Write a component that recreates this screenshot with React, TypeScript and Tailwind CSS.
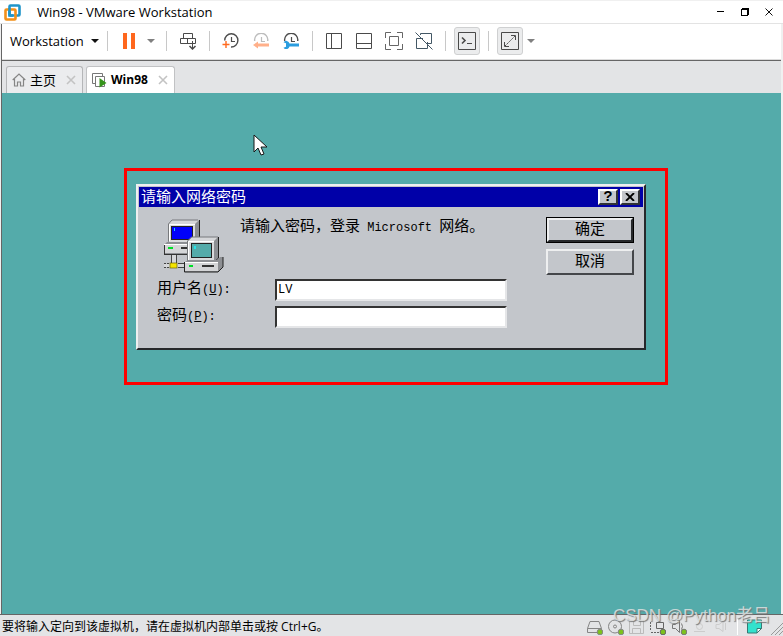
import React, { useState } from 'react';

const uiFont = "font-['Open_Sans','Noto_Sans_CJK_SC',sans-serif]";
const guestFont = "font-['Liberation_Mono','Noto_Sans_CJK_SC',monospace]";

function Separator() {
  return <span className="h-5 w-px shrink-0 bg-[#c8c8c8]" />;
}

function ToolButton({ label, active, children }: { label: string; active?: boolean; children: React.ReactNode }) {
  return (
    <button
      aria-label={label}
      className={
        active
          ? 'flex h-7 w-[26px] items-center justify-center rounded-[3px] border border-[#cfd0d1] bg-[#ebeced]'
          : 'flex h-7 w-[30px] items-center justify-center'
      }
    >
      {children}
    </button>
  );
}

function Caret({ color }: { color: string }) {
  return (
    <svg width="8" height="4" viewBox="0 0 8 4">
      <path d="M0 0h8L4 4z" fill={color} />
    </svg>
  );
}

function ClockIcon({ kind }: { kind: 'take' | 'revert' | 'manage' }) {
  const faded = kind === 'revert';
  return (
    <svg width="18" height="16" viewBox="0 0 18 16" fill="none">
      <path
        d={kind === 'take' ? 'M2.7 7.500A6.600 6.600 0 1 1 9 14' : 'M2.7 8A6.600 6.600 0 1 1 15.7 8'}
        stroke={faded ? '#bdbdbd' : '#4d4d4d'}
        strokeWidth="1.4"
      />
      <path d="M9.5 4v4.5H13" stroke={faded ? '#bdbdbd' : '#4d4d4d'} strokeWidth="1.2" />
      {kind === 'take' && <path d="M.5 11.500h7M4 8v7" stroke="#ff6a1f" strokeWidth="1.4" />}
      {kind === 'revert' && <path d="M1 12l5-3.500V10.500h11v3H6v2z" fill="#ffb08a" />}
      {kind === 'manage' && (
        <path d="M1.500 9.300A3.300 3.300 0 0 1 7.500 10.500H17v3H7.500A3.300 3.300 0 0 1 1.500 14.700L4 13.700V10.300z" fill="#2b9ddf" />
      )}
    </svg>
  );
}

function TabClose() {
  return (
    <svg width="10" height="10" viewBox="0 0 10 10">
      <path d="M1 1l8 8M9 1L1 9" stroke="#c3c3c3" strokeWidth="1.6" />
    </svg>
  );
}

function NetworkIcon() {
  return (
    <svg width="60" height="54" viewBox="0 0 60 54" aria-hidden="true">
      <path d="M4 5l4-4h27v18l-4 4H4z" fill="#8d8f93" />
      <path d="M4 5l4-4h27l-4 4z" fill="#d5d6d9" />
      <path d="M4.500 22V5L8 1h26" fill="none" stroke="#77797c" />
      <path d="M35.500 1v18l-4 4" fill="none" stroke="#222" />
      <rect x="5" y="5" width="26" height="18" fill="#d9dadc" />
      <path d="M5.500 22V5.500H31" fill="none" stroke="#fff" />
      <rect x="7" y="7" width="22" height="14" fill="#222" />
      <rect x="8" y="8" width="20" height="12" fill="#0000fa" />
      <rect x="10" y="9" width="1" height="3" fill="#19d5f0" />
      <path d="M0 26l3-3h29v12H0z" fill="#8d8f93" />
      <rect x="1" y="25" width="31" height="9" fill="#d4d5d7" />
      <path d="M0 25.500h32" stroke="#fff" />
      <path d="M0 35.500h24M.5 26v9" stroke="#333" fill="none" />
      <rect x="4" y="28" width="5" height="2" fill="#00df28" />
      <rect x="17" y="28" width="8" height="2" fill="#333" />
      <rect x="7" y="36" width="6" height="9" fill="#d5d6d8" />
      <path d="M7.500 36v8M12.500 36v8" stroke="#444" />
      <rect x="0" y="45" width="22" height="3" fill="#d5d6d8" />
      <path d="M0 44.500h7M0 48.500h7" stroke="#444" strokeDasharray="2 1" />
      <path d="M14 44.500h8M14 48.500h8" stroke="#444" />
      <rect x="6" y="44" width="7" height="5" fill="#f4e400" stroke="#6d6600" strokeWidth=".7" />
      <path d="M24 22l4-4h26v22l-4 4H24z" fill="#8d8f93" />
      <path d="M24 22l4-4h26l-4 4z" fill="#d5d6d9" />
      <path d="M23.500 43V22l4-4H54" fill="none" stroke="#77797c" />
      <path d="M54.500 18v21l-4 4" fill="none" stroke="#222" />
      <rect x="24" y="22" width="26" height="20" fill="#d9dadc" />
      <path d="M24.500 42V22.500H50" fill="none" stroke="#fff" />
      <rect x="27" y="24" width="21" height="15" fill="#222" />
      <rect x="28" y="25" width="19" height="13" fill="#54abaa" />
      <rect x="30" y="27" width="2" height="3" fill="#25e5e9" />
      <path d="M21 43l3-2h29l3-3h3v10l-5 5H21z" fill="#8d8f93" />
      <rect x="21" y="43" width="33" height="9" fill="#d4d5d7" />
      <path d="M21 43.500h33" stroke="#fff" />
      <path d="M20.500 43v10H54l5-5V38" stroke="#222" fill="none" />
      <rect x="25" y="46" width="4" height="2" fill="#00df28" />
      <rect x="38" y="46" width="12" height="2" fill="#333" />
    </svg>
  );
}

function TitleBar() {
  return (
    <header className="flex h-6 items-center border-t border-b border-t-[#f0f0f0] border-b-[#e3e3e3] bg-white pr-0.5 pl-1">
      <svg width="17" height="17" viewBox="0 0 17 17" fill="none" className="mr-4">
        <rect x="5.500" y="1.500" width="10" height="10" rx="1" stroke="#1f94c9" strokeWidth="2.600" />
        <rect x="1.500" y="5.500" width="10" height="10" rx="1" stroke="#f39019" strokeWidth="2.600" />
        <path d="M5.500 4v7.500H9" stroke="#1f94c9" strokeWidth="2.600" />
      </svg>
      <h1 className="grow text-[13px] leading-5 text-black">Win98 - VMware Workstation</h1>
      <div className="flex items-center">
        <button aria-label="Minimize" className="flex h-5 w-6 items-center justify-center">
          <svg width="8" height="8" viewBox="0 0 8 8" shapeRendering="crispEdges"><path d="M0 3h7v1H0z" /></svg>
        </button>
        <button aria-label="Restore" className="flex h-5 w-6 items-center justify-center">
          <svg width="8" height="8" viewBox="0 0 8 8" shapeRendering="crispEdges">
            <path d="M1 0h7v7H7V8H0V1h1zM1 2v5h5V2z" fillRule="evenodd" />
          </svg>
        </button>
        <button aria-label="Close" className="flex h-5 w-6 items-center justify-center">
          <svg width="8" height="8" viewBox="0 0 8 8"><path d="M.5.5l7 7M7.500.5l-7 7" stroke="#111" /></svg>
        </button>
      </div>
    </header>
  );
}

function Toolbar() {
  const line = '#4a4a4a';
  return (
    <div role="toolbar" className="flex h-[37px] items-center border-b border-b-[#666] bg-white pb-0.5 shadow-[inset_0_-1px_0_#dcdcdc]">
      <button className="flex w-[105px] items-center justify-between pr-2 pl-2 text-[13px] leading-5 text-black">
        Workstation <Caret color="#111" />
      </button>
      <Separator />
      <div className="flex items-center pr-2 pl-1.5">
        <ToolButton label="Suspend">
          <svg width="12" height="16" viewBox="0 0 12 16"><path d="M0 0h4v16H0zM8 0h4v16H8z" fill="#ff671d" /></svg>
        </ToolButton>
        <button aria-label="Power options" className="flex h-7 w-[14px] items-center justify-center"><Caret color="#808080" /></button>
      </div>
      <Separator />
      <div className="flex items-center px-1.5">
        <ToolButton label="Send Ctrl+Alt+Del">
          <svg width="17" height="17" viewBox="0 0 17 17" fill="none" stroke={line}>
            <path d="M3.500 5.500v-5h9v5M.5 5.500h15v5H.5zM7.500 5.500v5M12.500 8v8" />
            <path d="M9.500 13l3 3 3-3" strokeWidth="1.500" />
          </svg>
        </ToolButton>
      </div>
      <Separator />
      <div className="flex items-center px-1.5">
        <ToolButton label="Take snapshot"><ClockIcon kind="take" /></ToolButton>
        <ToolButton label="Revert snapshot"><ClockIcon kind="revert" /></ToolButton>
        <ToolButton label="Manage snapshots"><ClockIcon kind="manage" /></ToolButton>
      </div>
      <Separator />
      <div className="flex items-center px-1.5">
        <ToolButton label="Show library">
          <svg width="16" height="16" viewBox="0 0 16 16" fill="none" stroke={line}><path d="M.5.5h15v15H.5zM5.500.5v15" /></svg>
        </ToolButton>
        <ToolButton label="Show thumbnails">
          <svg width="16" height="16" viewBox="0 0 16 16" fill="none" stroke={line}><path d="M.5.5h15v15H.5zM.5 10.500h15" /></svg>
        </ToolButton>
        <ToolButton label="Full screen">
          <svg width="18" height="18" viewBox="0 0 18 18" fill="none" stroke="#666">
            <path d="M.5 6V.5H6M12 .5h5.500V6M17.500 12v5.500H12M6 17.500H.5V12M4.500 4.500h9v9h-9z" />
          </svg>
        </ToolButton>
        <ToolButton label="Unity">
          <svg width="18" height="18" viewBox="0 0 18 18" fill="none" stroke="#435765">
            <path d="M5.500 3V1.500h11v10H13M8 6.500H1.500v10h11V10M.5.5l17 17" />
          </svg>
        </ToolButton>
      </div>
      <Separator />
      <div className="flex items-center px-2">
        <ToolButton label="Console view" active>
          <svg width="18" height="18" viewBox="0 0 18 18" fill="none" stroke={line} className="shrink-0">
            <path d="M.5.5h17v17H.5zM9 11.500h5" /><path d="M4 5.500l3 3-3 3" strokeWidth="1.600" />
          </svg>
        </ToolButton>
      </div>
      <Separator />
      <div className="flex items-center pl-2">
        <ToolButton label="Stretch guest" active>
          <svg width="18" height="18" viewBox="0 0 18 18" fill="none" stroke={line} className="shrink-0">
            <path d="M.5.5h17v17H.5zM10 3.500h4.500V8M3.500 10v4.500H8" /><path d="M4 14L14 4" strokeDasharray="2 1" />
          </svg>
        </ToolButton>
        <button aria-label="Stretch options" className="flex h-7 w-4 items-center justify-center"><Caret color="#808080" /></button>
      </div>
    </div>
  );
}

function Tabs() {
  return (
    <nav className="flex h-8 items-end gap-[3px] bg-[#e3e4e6] pl-1">
      <div className="flex h-[27px] items-center rounded-t-[3px] border border-b-0 border-[#b5b6b8] bg-[#ebecee] pr-1.5 pl-[5px]">
        <svg width="14" height="14" viewBox="0 0 14 14" fill="none" stroke="#858585" strokeWidth="1.200" className="mr-1">
          <path d="M.7 7L7 1l6.300 6M2.500 6v7h3V9h3v4h3V6" />
        </svg>
        <button className="mr-2.5 text-[13px] leading-5 text-black">主页</button>
        <button aria-label="关闭 主页"><TabClose /></button>
      </div>
      <div className="flex h-[27px] items-center rounded-t-[3px] border border-b-0 border-[#c1c2c4] bg-white pr-1.5 pl-[5px]">
        <svg width="15" height="15" viewBox="0 0 15 15" fill="none" stroke="#777" className="mr-1">
          <path d="M3 10.500H.5V.5h10V3M3.500 3.500h9v10h-9z" fill="none" /><path d="M7.500 5v9.500L14.500 10z" fill="#36941b" stroke="none" />
        </svg>
        <button className="mr-2.5 text-[12px] leading-5 font-bold text-black">Win98</button>
        <button aria-label="关闭 Win98"><TabClose /></button>
      </div>
    </nav>
  );
}

const sunken =
  'border-2 border-t-[#333] border-l-[#333] border-r-[#e5e6e8] border-b-[#e5e6e8] bg-white';

function LoginDialog() {
  const [user, setUser] = useState('LV');
  const [password, setPassword] = useState('');
  return (
    <section
      role="dialog"
      aria-labelledby="dialog-title"
      className={`${guestFont} border-2 border-t-[#eeeff0] border-r-[#26282b] border-b-[#26282b] border-l-[#eeeff0] bg-[#c3c6cb] p-px text-[12px] text-black`}
    >
      <header className="flex h-5 items-center bg-[#0000a8] pr-[3px] pl-0.5">
        <h2 id="dialog-title" className="grow pt-[3px] text-[15px] leading-5 text-white">请输入网络密码</h2>
        <div className="flex gap-0.5">
          <button aria-label="帮助" className="flex h-4 w-5 items-center justify-center border-2 border-t-white border-r-[#303235] border-b-[#303235] border-l-white bg-[#c3c6cb] pt-0.5 text-[15px] leading-3 font-bold">?</button>
          <button aria-label="关闭" className="flex h-4 w-5 items-center justify-center border-2 border-t-white border-r-[#303235] border-b-[#303235] border-l-white bg-[#c3c6cb]">
            <svg width="10" height="8" viewBox="0 0 10 8"><path d="M1 0l8 8M9 0L1 8" stroke="#000" strokeWidth="1.800" /></svg>
          </button>
        </div>
      </header>
      <div className="flex justify-between pt-2.5 pr-[9px] pb-[19px] pl-[18px]">
        <form onSubmit={(e) => e.preventDefault()}>
          <div className="flex gap-4 pt-0.5 pl-[7px]">
            <NetworkIcon />
            <p className="pt-px leading-4 whitespace-nowrap">
              <span className="text-[15px]">请输入密码，登录</span> Microsoft <span className="text-[15px]">网络。</span>
            </p>
          </div>
          <div className="mt-1.5 grid grid-cols-[118px_232px] items-center gap-y-[5px]">
            <label htmlFor="user" className="leading-5"><span className="text-[15px]">用户名</span>(<u>U</u>):</label>
            <input id="user" value={user} onChange={(e) => setUser(e.target.value)} className={`${sunken} h-[22px] px-px font-['Liberation_Mono',monospace] text-[12px] outline-none`} />
            <label htmlFor="password" className="leading-5"><span className="text-[15px]">密码</span>(<u>P</u>):</label>
            <input id="password" type="password" value={password} onChange={(e) => setPassword(e.target.value)} className={`${sunken} h-[22px] px-px outline-none`} />
          </div>
        </form>
        <div className="flex w-[88px] flex-col gap-1.5">
          <button className="h-[26px] border border-black bg-[#c3c6cb] text-[15px]">
            <span className="flex h-full items-center justify-center border-2 border-t-[#eeeff0] border-r-[#26282b] border-b-[#26282b] border-l-[#eeeff0] pt-0.5 leading-5">确定</span>
          </button>
          <button className="flex h-[26px] items-center justify-center border-2 border-t-[#eeeff0] border-r-[#44464a] border-b-[#44464a] border-l-[#eeeff0] bg-[#c3c6cb] pt-0.5 text-[15px] leading-5">取消</button>
        </div>
      </div>
    </section>
  );
}

function StatusBar() {
  const dot = <circle cx="14" cy="14" r="2.800" fill="#7cc21c" />;
  return (
    <footer className="relative flex h-[22px] items-center justify-between border-t border-[#666] bg-[#e3e4e6] pl-0.5">
      <p className="pt-0.5 text-[12px] leading-5 text-black">要将输入定向到该虚拟机，请在虚拟机内部单击或按 Ctrl+G。</p>
      <div className="flex items-center pt-0.5">
        <div className="mr-1 flex items-center gap-1">
          <svg width="17" height="17" viewBox="0 0 17 17" fill="none" stroke="#858585"><path d="M4 3.500h9l2.500 7v4h-14v-4zM1.500 10.500h14" />{dot}</svg>
          <svg width="17" height="17" viewBox="0 0 17 17" fill="none" stroke="#858585"><circle cx="8" cy="8.500" r="6.500" /><circle cx="8" cy="8.500" r="1.500" />{dot}</svg>
          <svg width="17" height="17" viewBox="0 0 17 17" fill="none" stroke="#bbb"><path d="M1.500 2.500h14v13h-14zM5.500 2.500v5h7v-5M4.500 15.500v-5h8v5" /></svg>
          <svg width="17" height="17" viewBox="0 0 17 17" fill="none" stroke="#666"><path d="M2 14.500h8M1.500 4v9" strokeDasharray="2 1" /><path d="M7.500 4.500h7v6h-7z" />{dot}</svg>
          <svg width="17" height="17" viewBox="0 0 17 17" fill="none" stroke="#777"><path d="M2.500 6.500h3l4-4v12l-4-4h-3zM11.500 5.500q2 3 0 6" />{dot}</svg>
          <svg width="17" height="17" viewBox="0 0 17 17" fill="none" stroke="#ccc"><circle cx="8.500" cy="8.500" r="3" /><path d="M3 13.500h11" /></svg>
          <svg width="17" height="17" viewBox="0 0 17 17" fill="none" stroke="#ccc"><path d="M4 6.500h3l4-3v10l-4-3H4zM13.500 5v7" /></svg>
        </div>
        <span className="mr-2 ml-1 h-4 w-px bg-white" />
        <svg width="17" height="17" viewBox="0 0 17 17" className="mr-2"><path d="M1.500 2h14v8.500L11 15H1.500z" fill="#32e2cd" stroke="#367a74" /><path d="M11 15v-4.500h4.500z" fill="#fff" stroke="#367a74" /></svg>
        <svg width="12" height="12" viewBox="0 0 12 12" stroke="#999" className="self-end"><path d="M0 12L12 0M4 12l8-8M8 12l4-4" /></svg>
      </div>
      <span className="absolute right-[13px] bottom-2 font-['Liberation_Sans','Noto_Sans_CJK_SC',sans-serif] text-[17px] leading-6 whitespace-nowrap text-[#e5e7e7]/80 [text-shadow:1px_1px_1px_#777]">
        CSDN @Python老吕
      </span>
    </footer>
  );
}

export default function App() {
  return (
    <div className={`${uiFont} flex min-h-screen flex-col bg-[#f0f0f0]`}>
      <TitleBar />
      <div className="mr-0.5 ml-px flex grow flex-col border-l border-[#666]">
        <Toolbar />
        <Tabs />
        <main className="relative grow bg-[#54abaa]">
          <svg width="15" height="22" viewBox="0 0 15 22" className="absolute top-[41px] left-[251px]">
            <path d="M1 1v17l4-4 3 7 3-1-3-7h6z" fill="#fff" stroke="#161616" />
          </svg>
          <div className="absolute top-[75px] left-[122px] w-[544px] border-3 border-[#fe0000] pt-[13px] pr-[19px] pb-8 pl-[9px]">
            <LoginDialog />
          </div>
        </main>
      </div>
      <StatusBar />
    </div>
  );
}
